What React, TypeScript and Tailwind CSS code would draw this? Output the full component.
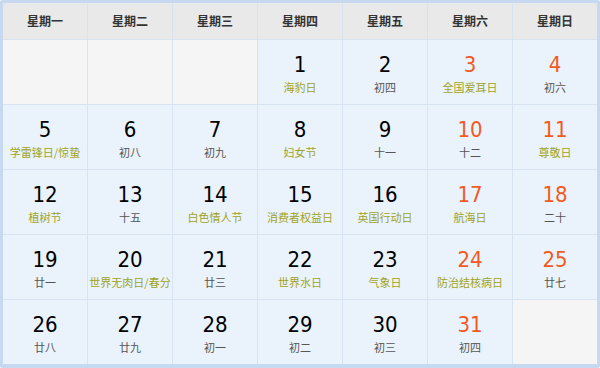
import React from "react";

type Day = { d: number; sub: string; hol?: boolean; red?: boolean };

const heads = ["星期一", "星期二", "星期三", "星期四", "星期五", "星期六", "星期日"];

const days: (Day | null)[] = [
	null,
	null,
	null,
	{ d: 1, sub: "海豹日", hol: true },
	{ d: 2, sub: "初四" },
	{ d: 3, sub: "全国爱耳日", hol: true, red: true },
	{ d: 4, sub: "初六", red: true },
	{ d: 5, sub: "学雷锋日/惊蛰", hol: true },
	{ d: 6, sub: "初八" },
	{ d: 7, sub: "初九" },
	{ d: 8, sub: "妇女节", hol: true },
	{ d: 9, sub: "十一" },
	{ d: 10, sub: "十二", red: true },
	{ d: 11, sub: "尊敬日", hol: true, red: true },
	{ d: 12, sub: "植树节", hol: true },
	{ d: 13, sub: "十五" },
	{ d: 14, sub: "白色情人节", hol: true },
	{ d: 15, sub: "消费者权益日", hol: true },
	{ d: 16, sub: "英国行动日", hol: true },
	{ d: 17, sub: "航海日", hol: true, red: true },
	{ d: 18, sub: "二十", red: true },
	{ d: 19, sub: "廿一" },
	{ d: 20, sub: "世界无肉日/春分", hol: true },
	{ d: 21, sub: "廿三" },
	{ d: 22, sub: "世界水日", hol: true },
	{ d: 23, sub: "气象日", hol: true },
	{ d: 24, sub: "防治结核病日", hol: true, red: true },
	{ d: 25, sub: "廿七", red: true },
	{ d: 26, sub: "廿八" },
	{ d: 27, sub: "廿九" },
	{ d: 28, sub: "初一" },
	{ d: 29, sub: "初二" },
	{ d: 30, sub: "初三" },
	{ d: 31, sub: "初四", red: true },
	null,
];

const cjk = { fontFamily: '"Noto Sans CJK SC", "Noto Sans", sans-serif' };
const num = { fontFamily: '"DejaVu Sans Condensed", "DejaVu Sans", sans-serif' };

export default function App() {
	return (
		<div className="w-[600px] h-[368px] bg-white">
			<div
				className="grid grid-cols-[repeat(7,84px)] grid-rows-[36px_repeat(5,64px)] gap-px bg-[#d7e3f1] border-[#c6d9f1] border-t-[3px] border-l-[3px] border-r-[3px] border-b-[4px] rounded-[2px]"
				style={cjk}
			>
				{heads.map((h) => (
					<div
						key={h}
						className="bg-[#e9e9e9] flex items-center justify-center text-[12px] font-bold text-[#333]"
					>
						{h}
					</div>
				))}
				{days.map((c, i) =>
					c ? (
						<div key={i} className="bg-[#eaf3fb] flex flex-col items-center pt-[12px]">
							<span
								className={`text-[22px] leading-[26px] ${c.red ? "text-[#f25a1f]" : "text-black"}`}
								style={num}
							>
								{c.d}
							</span>
							<span
								className={`mt-[2px] text-[11px] leading-[14px] whitespace-nowrap ${c.hol ? "text-[#9fa324]" : "text-[#555]"}`}
							>
								{c.sub}
							</span>
						</div>
					) : (
						<div key={i} className="bg-[#f5f5f5]" />
					)
				)}
			</div>
		</div>
	);
}
